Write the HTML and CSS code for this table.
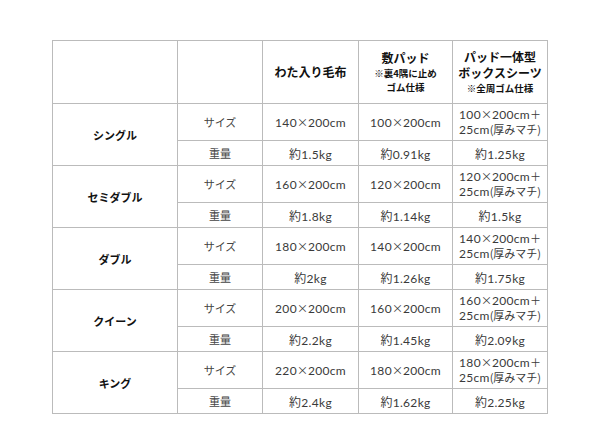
FILE: index.html
```html
<!DOCTYPE html>
<html lang="ja">
<head>
<meta charset="utf-8">
<link rel="stylesheet" href="styles.css">
</head>
<body>
<div class="spec">
  <div class="cell head"></div>
  <div class="cell head"></div>
  <div class="cell head"><div class="h1">わた入り毛布</div></div>
  <div class="cell head"><div class="h1">敷パッド</div><div class="h2">※裏4隅に止め<br>ゴム仕様</div></div>
  <div class="cell head"><div class="h1">パッド一体型<br>ボックスシーツ</div><div class="h2">※全周ゴム仕様</div></div>

  <div class="cell type">シングル</div>
  <div class="cell label">サイズ</div>
  <div class="cell val"><span>140<span class="x">×</span>200cm</span></div>
  <div class="cell val"><span>100<span class="x">×</span>200cm</span></div>
  <div class="cell val two"><span>100<span class="x">×</span>200cm<span class="x">＋</span><br>25cm<span class="x">(厚みマチ)</span></span></div>
  <div class="cell label">重量</div>
  <div class="cell val"><span>約1.5kg</span></div>
  <div class="cell val"><span>約0.91kg</span></div>
  <div class="cell val"><span>約1.25kg</span></div>

  <div class="cell type">セミダブル</div>
  <div class="cell label">サイズ</div>
  <div class="cell val"><span>160<span class="x">×</span>200cm</span></div>
  <div class="cell val"><span>120<span class="x">×</span>200cm</span></div>
  <div class="cell val two"><span>120<span class="x">×</span>200cm<span class="x">＋</span><br>25cm<span class="x">(厚みマチ)</span></span></div>
  <div class="cell label">重量</div>
  <div class="cell val"><span>約1.8kg</span></div>
  <div class="cell val"><span>約1.14kg</span></div>
  <div class="cell val"><span>約1.5kg</span></div>

  <div class="cell type">ダブル</div>
  <div class="cell label">サイズ</div>
  <div class="cell val"><span>180<span class="x">×</span>200cm</span></div>
  <div class="cell val"><span>140<span class="x">×</span>200cm</span></div>
  <div class="cell val two"><span>140<span class="x">×</span>200cm<span class="x">＋</span><br>25cm<span class="x">(厚みマチ)</span></span></div>
  <div class="cell label">重量</div>
  <div class="cell val"><span>約2kg</span></div>
  <div class="cell val"><span>約1.26kg</span></div>
  <div class="cell val"><span>約1.75kg</span></div>

  <div class="cell type">クイーン</div>
  <div class="cell label">サイズ</div>
  <div class="cell val"><span>200<span class="x">×</span>200cm</span></div>
  <div class="cell val"><span>160<span class="x">×</span>200cm</span></div>
  <div class="cell val two"><span>160<span class="x">×</span>200cm<span class="x">＋</span><br>25cm<span class="x">(厚みマチ)</span></span></div>
  <div class="cell label">重量</div>
  <div class="cell val"><span>約2.2kg</span></div>
  <div class="cell val"><span>約1.45kg</span></div>
  <div class="cell val"><span>約2.09kg</span></div>

  <div class="cell type">キング</div>
  <div class="cell label">サイズ</div>
  <div class="cell val"><span>220<span class="x">×</span>200cm</span></div>
  <div class="cell val"><span>180<span class="x">×</span>200cm</span></div>
  <div class="cell val two"><span>180<span class="x">×</span>200cm<span class="x">＋</span><br>25cm<span class="x">(厚みマチ)</span></span></div>
  <div class="cell label">重量</div>
  <div class="cell val"><span>約2.4kg</span></div>
  <div class="cell val"><span>約1.62kg</span></div>
  <div class="cell val"><span>約2.25kg</span></div>
</div>
</body>
</html>
```
FILE: styles.css
```css
* { box-sizing: border-box; }
html, body { margin: 0; padding: 0; background: #fff; }
body {
  font-family: "Noto Sans CJK JP", "Noto Sans", sans-serif;
  color: #333;
}
.spec {
  margin: 40px 0 0 52px;
  width: 496px;
  display: grid;
  grid-template-columns: 125px 85px 96px 94px 95px;
  grid-template-rows: 63px repeat(5, 37px 25px);
  border-left: 1px solid #bbb;
  border-top: 1px solid #bbb;
}
.cell {
  border-right: 1px solid #bbb;
  border-bottom: 1px solid #bbb;
  display: flex;
  flex-direction: column;
  align-items: center;
  justify-content: center;
  text-align: center;
}
.head { color: #111; font-weight: bold; }
.h1 { font-size: 12px; line-height: 16px; }
.h2 { font-size: 9.5px; line-height: 14px; }
.type {
  grid-row: span 2;
  font-size: 11px;
  font-weight: bold;
  color: #111;
}
.label { font-size: 11px; color: #444; }
.val {
  font-family: "Lato", "Noto Sans CJK JP", sans-serif;
  font-size: 12px;
  color: #3a3a3a;
  letter-spacing: 0.3px;
}
.two { line-height: 14.5px; }
.x {
  font-family: "Noto Sans CJK JP", sans-serif;
  font-size: 11px;
  letter-spacing: 0;
}
```
